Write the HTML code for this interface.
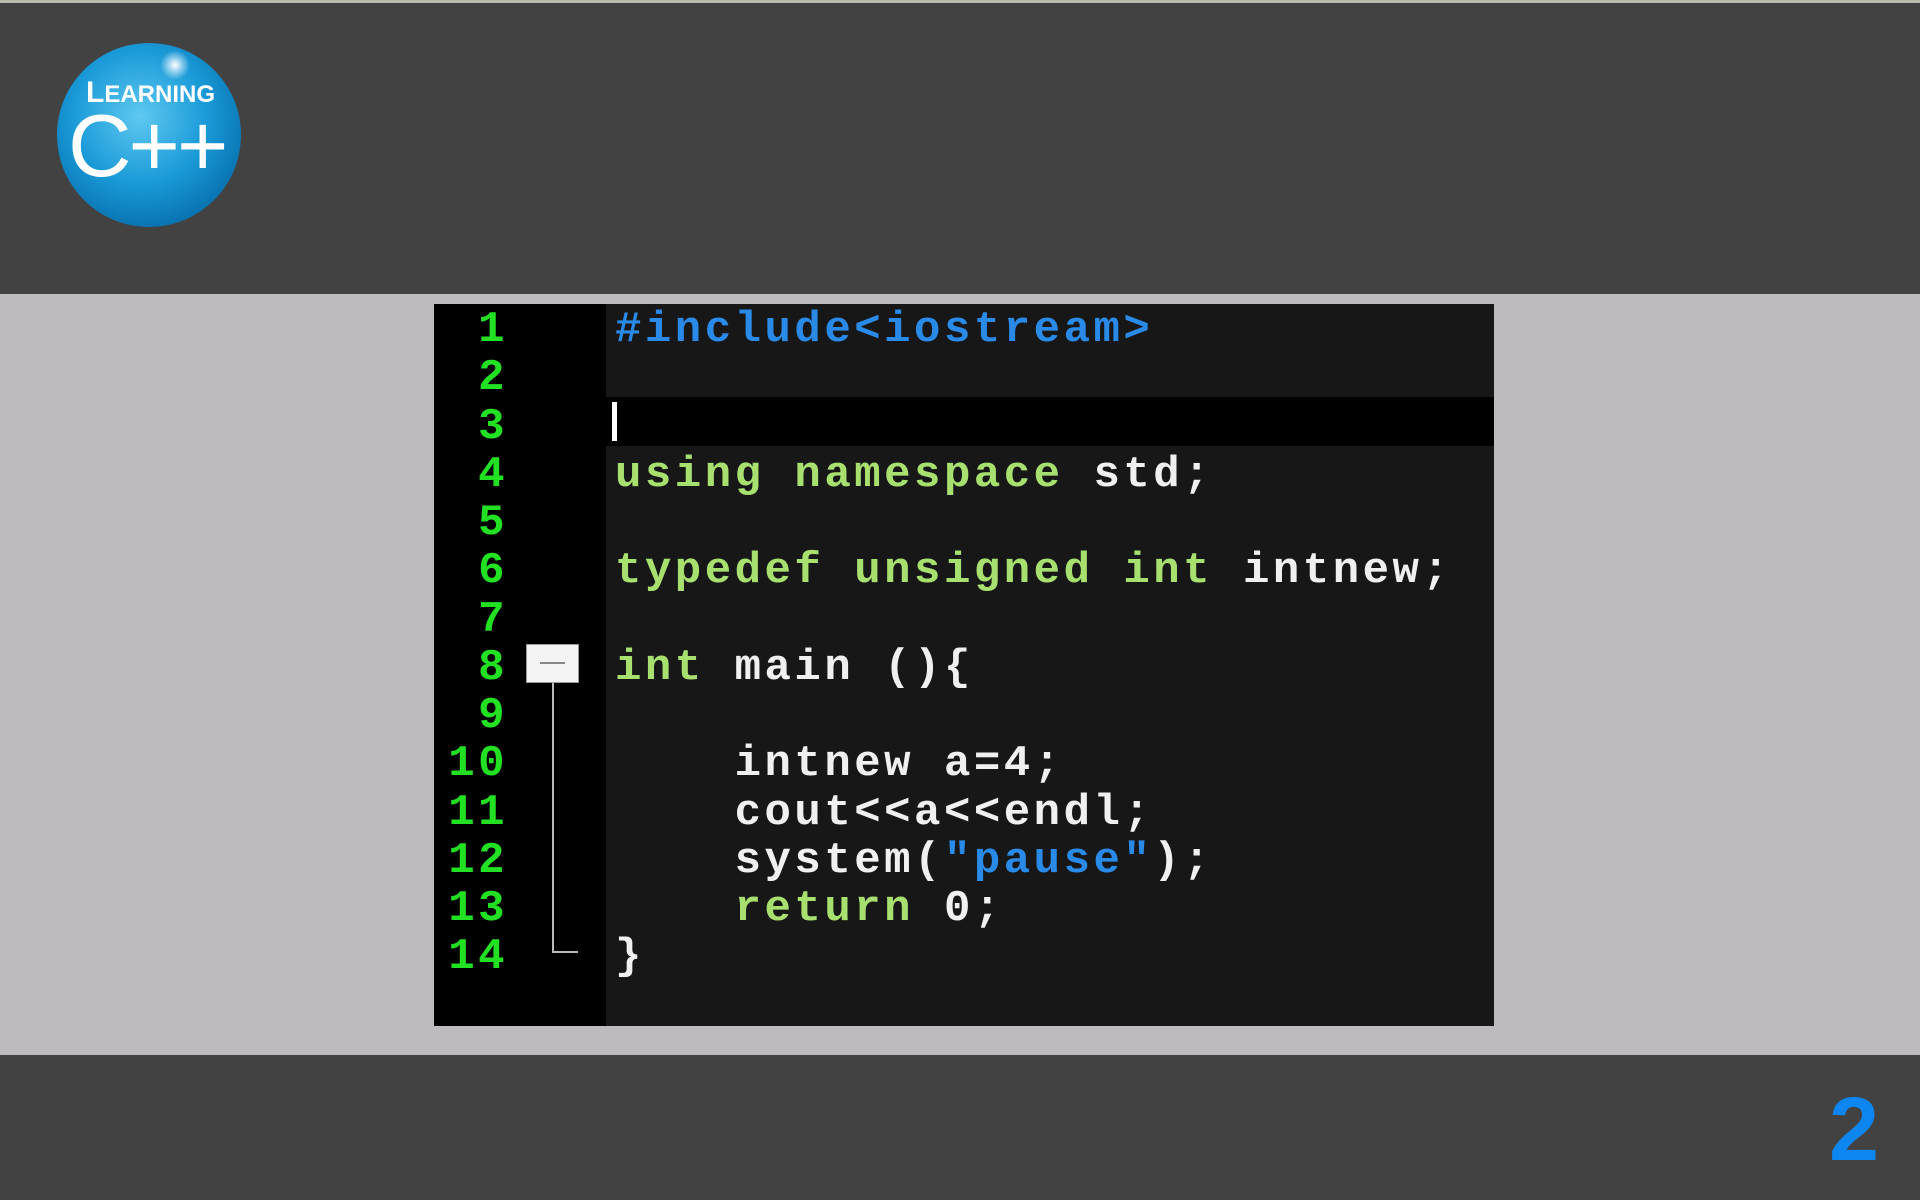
<!DOCTYPE html>
<html><head><style>
body{margin:0;width:1920px;height:1200px;position:relative;overflow:hidden;background:#bfbabd;font-family:"Liberation Sans",sans-serif}
.bar{position:absolute;left:0;width:1920px;background:#424242}
.code{position:absolute;left:434px;top:304px;width:1060px;height:722px;background:#171717}
.gut{position:absolute;left:0;top:0;width:172px;height:722px;background:#000}
.l{position:absolute;font-family:"Liberation Mono",monospace;font-size:44px;letter-spacing:3.5px;line-height:48.25px;white-space:pre;font-weight:bold;top:2px}
.n{color:#22e022;text-align:right;width:74px;left:0}
.t{left:181px;color:#f0f0f0}
.g{color:#a8e070}.b{color:#2a8ae8}
</style></head><body>
<div class="bar" style="top:0;height:294px;border-top:3px solid #bcbcae;box-sizing:border-box"></div>
<div class="bar" style="top:1055px;height:145px"></div>
<div style="position:absolute;left:57px;top:43px;width:184px;height:184px;border-radius:50%;background:radial-gradient(circle at 45% 40%,#5ec8f0 0%,#1a9ad8 45%,#0873b0 75%,#063650 100%)"></div>
<div style="position:absolute;left:160px;top:50px;width:30px;height:30px;border-radius:50%;background:radial-gradient(circle,#fff 0%,rgba(255,255,255,.4) 40%,transparent 70%)"></div>
<div style="position:absolute;left:86px;top:76px;color:#fff;font-size:30px;font-weight:bold">L<span style="font-size:24px">EARNING</span></div>
<div style="position:absolute;left:68px;top:102px;color:#fff;font-size:88px;line-height:88px;letter-spacing:-3px">C++</div>
<div class="code"><div class="gut"></div>
<div style="position:absolute;left:172px;top:93px;width:888px;height:49px;background:#000"></div>
<div style="position:absolute;left:178px;top:98px;width:5px;height:39px;background:#fff"></div>
<div style="position:absolute;left:92px;top:340px;width:53px;height:39px;background:#f4f4f4;border:1px solid #999;box-sizing:border-box"></div>
<div style="position:absolute;left:106px;top:358px;width:25px;height:2px;background:#888"></div>
<div style="position:absolute;left:118px;top:379px;width:2px;height:270px;background:#bbb"></div>
<div style="position:absolute;left:118px;top:647px;width:26px;height:2px;background:#bbb"></div>
<div class="l n">1
2
3
4
5
6
7
8
9
10
11
12
13
14</div>
<div class="l t"><span class="b">#include&lt;iostream&gt;</span>


<span class="g">using namespace</span> std;

<span class="g">typedef unsigned int</span> intnew;

<span class="g">int</span> main (){

    intnew a=4;
    cout&lt;&lt;a&lt;&lt;endl;
    system(<span class="b">"pause"</span>);
    <span class="g">return</span> 0;
}</div>
</div>
<div style="position:absolute;left:1829px;top:1084px;color:#0d86f2;font-size:90px;font-weight:bold;line-height:92px">2</div>
</body></html>
